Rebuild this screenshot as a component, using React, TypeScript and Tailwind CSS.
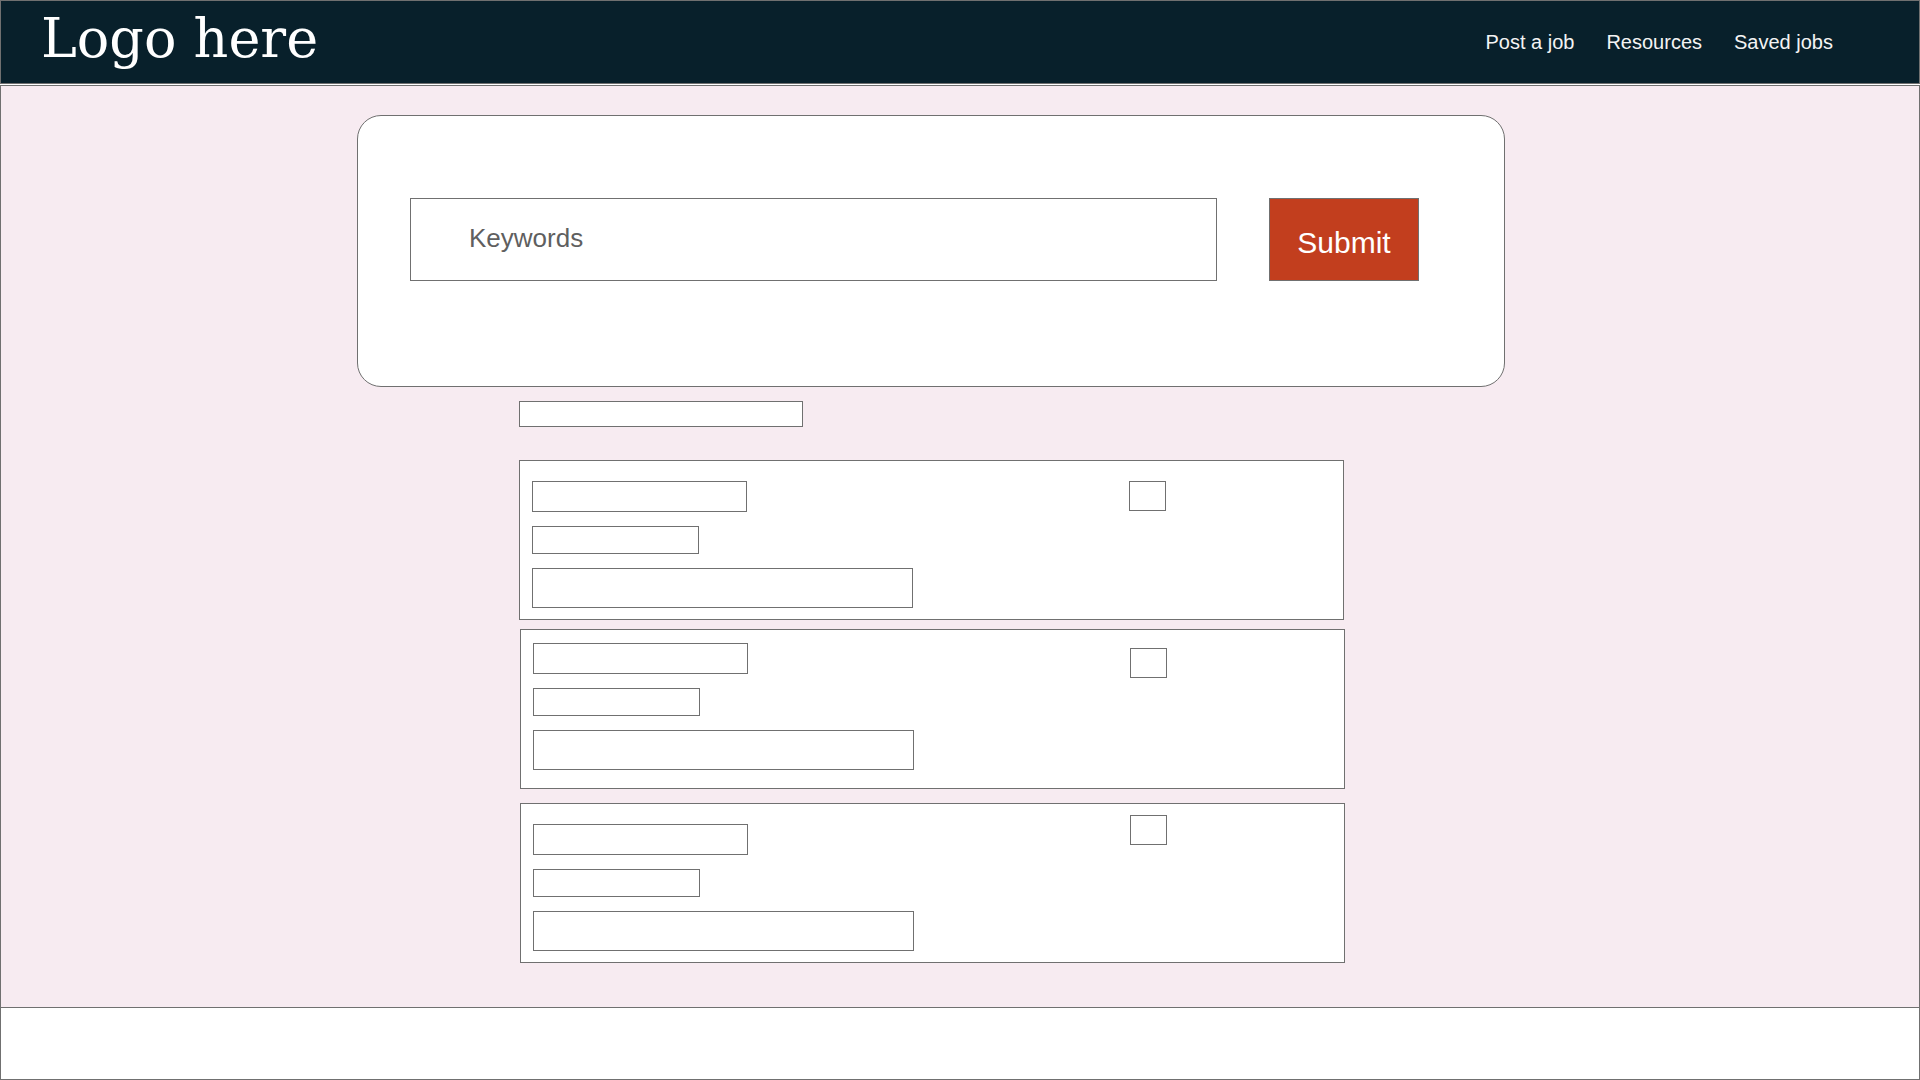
const NAV = ['Post a job', 'Resources', 'Saved jobs'];

const RESULTS = [
  { card: 'ml-0 mt-[33px]', col: 'mt-[20px]', sq: 'mt-[20px]' },
  { card: 'ml-px mt-[9px]', col: 'mt-[13px]', sq: 'mt-[18px]' },
  { card: 'ml-px mt-[14px]', col: 'mt-[20px]', sq: 'mt-[11px]' },
];

function ResultCard({ card, col, sq }: { card: string; col: string; sq: string }) {
  return (
    <div className={`flex items-start w-[825px] h-[160px] bg-white border border-[#707070] pl-3 ${card}`}>
      <div className={`flex flex-col gap-[14px] w-[597px] ${col}`}>
        <div className="w-[215px] h-[31px] border border-[#707070]" />
        <div className="w-[167px] h-[28px] border border-[#707070]" />
        <div className="w-[381px] h-[40px] border border-[#707070]" />
      </div>
      <div className={`w-[37px] h-[30px] border border-[#707070] ${sq}`} />
    </div>
  );
}

export default function App() {
  return (
    <div className="w-[1920px] h-[1080px] bg-white overflow-hidden">
      {/* Header */}
      <header className="flex items-center justify-between h-[84px] bg-[#08202b] border border-[#707070] pl-[40px] pr-[86px]">
        <div className="text-[54px] leading-none text-white pb-[6px] font-['DejaVu_Serif',serif]">
          Logo here
        </div>
        <nav className="flex items-center gap-8 text-[20px] text-[#f4f4f4] font-['Liberation_Sans',Arial,sans-serif]">
          {NAV.map((item) => (
            <span key={item}>{item}</span>
          ))}
        </nav>
      </header>

      {/* Main */}
      <main className="mt-px h-[923px] bg-[#f7ebf1] border border-[#707070] pt-[29px]">
        <div className="ml-[356px] w-[1148px] h-[272px] bg-white border border-[#707070] rounded-3xl pl-[52px] pt-[82px]">
          <div className="flex items-start gap-[52px]">
            <input
              placeholder="Keywords"
              className="w-[807px] h-[83px] border border-[#707070] pl-[58px] pb-[3px] text-[26px] text-[#5f5f5f] placeholder:text-[#5f5f5f] outline-none font-['Liberation_Sans',Arial,sans-serif]"
            />
            <button className="w-[150px] h-[83px] bg-[#c23e1e] border border-[#707070] text-white text-[30px] pt-[6px] font-['Liberation_Sans',Arial,sans-serif]">
              Submit
            </button>
          </div>
        </div>

        <div className="ml-[518px] flex flex-col">
          <div className="mt-[14px] w-[284px] h-[26px] bg-white border border-[#707070]" />
          {RESULTS.map((r, i) => (
            <ResultCard key={i} {...r} />
          ))}
        </div>
      </main>

      {/* Footer */}
      <footer className="h-[72px] bg-white border-x border-b border-[#707070]" />
    </div>
  );
}
